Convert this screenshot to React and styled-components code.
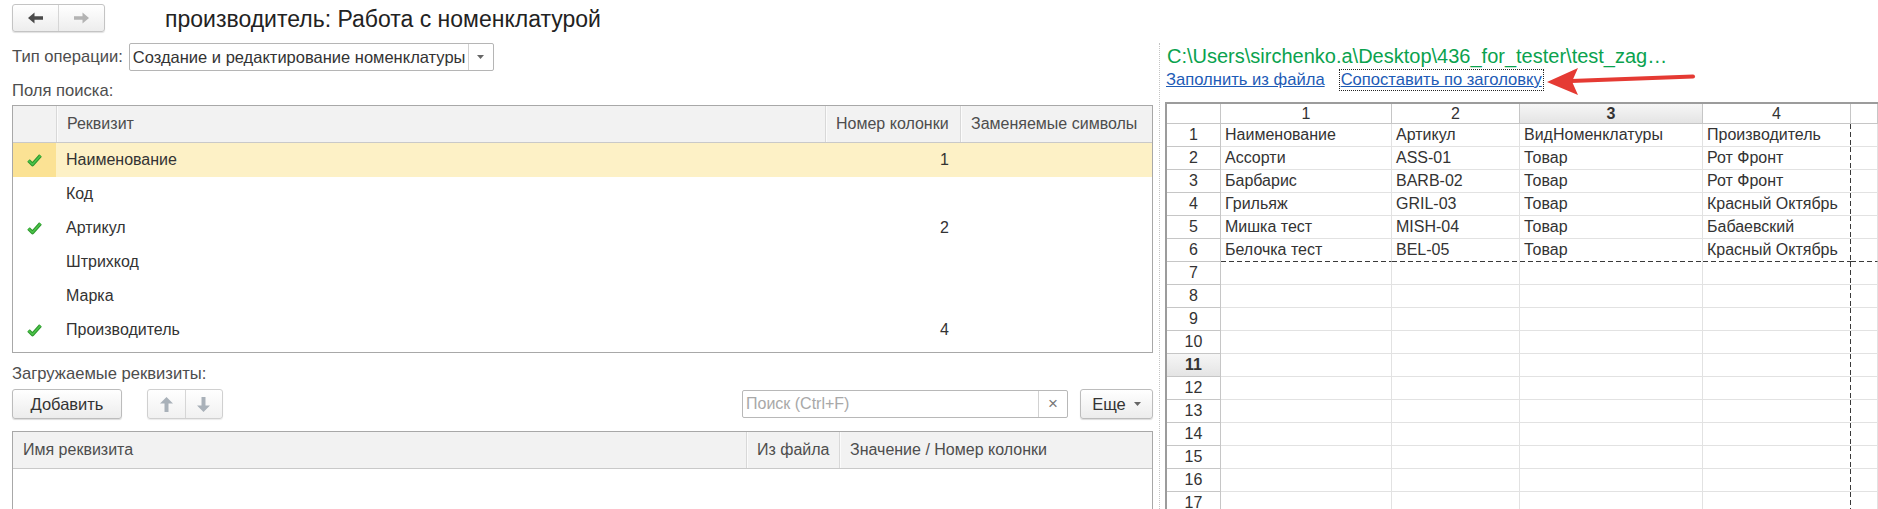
import React from "react";
import styled, { createGlobalStyle } from "styled-components";

const GlobalStyle = createGlobalStyle`
  html, body { margin: 0; padding: 0; background: #fff; }
  body { font-family: "Liberation Sans", Arial, sans-serif; color: #333; overflow: hidden; }
  * { box-sizing: border-box; }
`;

const Page = styled.div`
  width: 1878px;
  height: 509px;
  display: flex;
  flex-direction: column;
  overflow: hidden;
`;

const TopBar = styled.div`
  height: 36px;
  flex: none;
  display: flex;
  align-items: flex-start;
  padding: 4px 0 0 12px;
`;

const NavGroup = styled.div`
  display: flex;
  width: 93px;
  height: 28px;
  border: 1px solid #c4c4c4;
  border-radius: 3px;
  background: linear-gradient(#ffffff, #ededed);
  box-shadow: 0 1px 1px rgba(0, 0, 0, 0.12);
`;

const NavButton = styled.div`
  flex: 1;
  display: flex;
  align-items: center;
  justify-content: center;
  & + & {
    border-left: 1px solid #d6d6d6;
  }
`;

const Title = styled.h1`
  margin: 0 0 0 60px;
  font-size: 23px;
  font-weight: normal;
  line-height: 30px;
  color: #222;
  white-space: nowrap;
`;

const Main = styled.div`
  flex: 1;
  display: flex;
  min-height: 0;
`;

const LeftPanel = styled.div`
  width: 1153px;
  flex: none;
  padding: 7px 0 0 12px;
  display: flex;
  flex-direction: column;
`;

const Splitter = styled.div`
  width: 1px;
  margin: 7px 5px 0 6px;
  border-left: 1px dotted #c4c4c4;
`;

const RightPanel = styled.div`
  position: relative;
  flex: 1;
  min-width: 0;
  padding-top: 8px;
  display: flex;
  flex-direction: column;
`;

const FieldRow = styled.div`
  display: flex;
  align-items: center;
  gap: 6px;
  height: 28px;
`;

const Label = styled.div`
  font-size: 16.6px;
  color: #4d4d4d;
  line-height: 20px;
  white-space: nowrap;
  margin-top: ${(p) => p.$top || 0}px;
`;

const Combo = styled.div`
  width: 365px;
  height: 28px;
  display: flex;
  border: 1px solid #b5b5b5;
  border-radius: 2px;
  background: #fff;
`;

const ComboText = styled.div`
  flex: 1;
  padding: 0 3px;
  font-size: 16.5px;
  line-height: 26px;
  color: #333;
  white-space: nowrap;
  overflow: hidden;
`;

const DropPart = styled.div`
  width: ${(p) => p.$w || 25}px;
  display: flex;
  align-items: center;
  justify-content: center;
  border-left: 1px solid #d2d2d2;
  color: #777;
  font-size: 17px;
`;

const Table = styled.div`
  margin-top: ${(p) => p.$top}px;
  border: 1px solid #a8a8a8;
  ${(p) => (p.$open ? "border-bottom: none; flex: 1;" : `height: ${p.$h}px;`)}
  background: #fff;
`;

const HeadRow = styled.div`
  display: grid;
  grid-template-columns: ${(p) => p.$cols};
  height: 37px;
  background: #f2f2f2;
  border-bottom: 1px solid #c9c9c9;
`;

const HeadCell = styled.div`
  display: flex;
  align-items: center;
  padding: 0 10px;
  font-size: 16px;
  color: #4d4d4d;
  white-space: nowrap;
  overflow: hidden;
  & + & {
    border-left: 1px solid #d8d8d8;
    box-shadow: inset 1px 0 0 #fbfbfb;
  }
`;

const BodyRow = styled.div`
  display: grid;
  grid-template-columns: ${(p) => p.$cols};
  height: 34px;
  background: ${(p) => (p.$sel ? "#fdf1c6" : "transparent")};
`;

const Cell = styled.div`
  display: flex;
  align-items: center;
  justify-content: ${(p) => (p.$right ? "flex-end" : p.$center ? "center" : "flex-start")};
  padding: ${(p) => (p.$right ? "0 11px 0 0" : p.$center ? "0" : "0 10px")};
  font-size: 16px;
  color: #333;
  background: ${(p) => (p.$mark ? "#fbe294" : "transparent")};
  white-space: nowrap;
`;

const ToolRow = styled.div`
  display: flex;
  align-items: center;
  height: 30px;
  margin-top: 5px;
`;

const Button = styled.div`
  width: ${(p) => p.$w}px;
  height: 30px;
  margin-left: ${(p) => p.$ml || 0}px;
  display: flex;
  align-items: center;
  justify-content: center;
  gap: 8px;
  border: 1px solid #bcbcbc;
  border-radius: 3px;
  background: linear-gradient(#ffffff, #ececec);
  box-shadow: 0 1px 1px rgba(0, 0, 0, 0.14);
  font-size: 16.5px;
  color: #333;
`;

const ButtonGroup = styled.div`
  width: 76px;
  height: 30px;
  margin-left: 25px;
  display: flex;
  border: 1px solid #d0d0d0;
  border-radius: 3px;
  background: linear-gradient(#ffffff, #f1f1f1);
  box-shadow: 0 1px 1px rgba(0, 0, 0, 0.08);
`;

const Spacer = styled.div`
  flex: 1;
`;

const Search = styled.div`
  width: 326px;
  height: 28px;
  display: flex;
  border: 1px solid #b8b8b8;
  border-radius: 2px;
  background: #fff;
`;

const Placeholder = styled.div`
  flex: 1;
  padding-left: 3px;
  font-size: 16px;
  line-height: 26px;
  color: #a8a8a8;
`;

const PathText = styled.div`
  padding-left: 2px;
  font-size: 20px;
  line-height: 24px;
  color: #0aa24e;
  white-space: nowrap;
`;

const LinksRow = styled.div`
  display: flex;
  align-items: center;
  height: 22px;
  margin-top: 1px;
  gap: 14px;
`;

const Link = styled.a`
  font-size: 16.6px;
  line-height: 20px;
  color: #1d5bb6;
  text-decoration: underline;
  padding: 0 1px;
  outline: ${(p) => (p.$focus ? "1px dotted #222" : "none")};
  white-space: nowrap;
`;

const Arrow = styled.svg`
  position: absolute;
  left: 380px;
  top: 28px;
`;

const Sheet = styled.div`
  margin-top: 11px;
  flex: 1;
  border-left: 2px solid #9c9c9c;
  border-top: 2px solid #9c9c9c;
  overflow: hidden;
  display: grid;
  grid-template-columns: 54px 171px 128px 183px 148px 1fr;
  grid-template-rows: 20px;
  grid-auto-rows: 23px;
`;

const SheetHead = styled.div`
  display: flex;
  align-items: center;
  justify-content: center;
  font-size: 16px;
  font-weight: ${(p) => (p.$active ? "bold" : "normal")};
  color: #333;
  background: ${(p) => (p.$active ? "linear-gradient(#f6f6f6, #e4e4e4)" : "#fff")};
  border-right: 1px solid #c6c6c6;
  border-bottom: 1px solid #c6c6c6;
`;

const dashX = "repeating-linear-gradient(to right, #3a3a3a 0 5px, transparent 5px 8px) left bottom / 100% 1px no-repeat";
const dashY = "repeating-linear-gradient(to bottom, #3a3a3a 0 5px, transparent 5px 8px) right top / 1px 100% no-repeat";

const SheetCell = styled.div`
  padding: 0 4px;
  font-size: 16px;
  line-height: 22px;
  color: #333;
  white-space: nowrap;
  overflow: hidden;
  border-right: 1px solid ${(p) => (p.$dashR ? "transparent" : "#e2e2e2")};
  border-bottom: 1px solid ${(p) => (p.$dashB ? "transparent" : "#e2e2e2")};
  background: ${(p) => [p.$dashB && dashX, p.$dashR && dashY].filter(Boolean).join(", ") || "none"};
  background-origin: border-box;
`;

const Check = () => (
  <svg width="17" height="14" viewBox="0 0 17 14">
    <polyline points="2.5,7.5 6.5,11.5 14.5,2.5" fill="none" stroke="#2c962c" strokeWidth="3.6" strokeLinejoin="round" />
    <polyline points="2.5,7.5 6.5,11.5 14.5,2.5" fill="none" stroke="#4cc44a" strokeWidth="1.6" strokeLinejoin="round" />
  </svg>
);

const HArrow = ({ dir, color }) => (
  <svg width="15" height="12" viewBox="0 0 15 12" style={{ transform: dir === "right" ? "scaleX(-1)" : "none" }}>
    <polygon points="0,6 6.5,0.5 6.5,4.3 15,4.3 15,7.7 6.5,7.7 6.5,11.5" fill={color} />
  </svg>
);

const VArrow = ({ dir }) => (
  <svg width="13" height="15" viewBox="0 0 13 15" style={{ transform: dir === "down" ? "scaleY(-1)" : "none" }}>
    <polygon points="6.5,0 13,6.5 8.5,6.5 8.5,15 4.5,15 4.5,6.5 0,6.5" fill="#a9b1b9" />
  </svg>
);

const Caret = () => (
  <svg width="7" height="4" viewBox="0 0 7 4">
    <polygon points="0,0 7,0 3.5,4" fill="#666" />
  </svg>
);

const searchCols = "43px 1fr 135px 192px";
const searchFields = [
  { name: "Наименование", col: "1", on: true, sel: true },
  { name: "Код" },
  { name: "Артикул", col: "2", on: true },
  { name: "Штрихкод" },
  { name: "Марка" },
  { name: "Производитель", col: "4", on: true },
];

const loadCols = "1fr 93px 313px";

const sheetData = [
  ["Наименование", "Артикул", "ВидНоменклатуры", "Производитель"],
  ["Ассорти", "ASS-01", "Товар", "Рот Фронт"],
  ["Барбарис", "BARB-02", "Товар", "Рот Фронт"],
  ["Грильяж", "GRIL-03", "Товар", "Красный Октябрь"],
  ["Мишка тест", "MISH-04", "Товар", "Бабаевский"],
  ["Белочка тест", "BEL-05", "Товар", "Красный Октябрь"],
];

function Spreadsheet() {
  const rows = [];
  for (let r = 1; r <= 17; r++) rows.push(sheetData[r - 1] || ["", "", "", ""]);
  return (
    <Sheet>
      <SheetHead />
      {[1, 2, 3, 4].map((c) => (
        <SheetHead key={c} $active={c === 3}>{c}</SheetHead>
      ))}
      <SheetHead />
      {rows.map((row, i) => (
        <React.Fragment key={i}>
          <SheetHead $active={i + 1 === 11}>{i + 1}</SheetHead>
          {row.map((v, c) => (
            <SheetCell key={c} $dashB={i === 5} $dashR={c === 3}>
              {v}
            </SheetCell>
          ))}
          <SheetCell $dashB={i === 5} />
        </React.Fragment>
      ))}
    </Sheet>
  );
}

export default function App() {
  return (
    <Page>
      <GlobalStyle />
      <TopBar>
        <NavGroup>
          <NavButton><HArrow dir="left" color="#4a4a4a" /></NavButton>
          <NavButton><HArrow dir="right" color="#b3b3b3" /></NavButton>
        </NavGroup>
        <Title>производитель: Работа с номенклатурой</Title>
      </TopBar>
      <Main>
        <LeftPanel>
          <FieldRow>
            <Label>Тип операции:</Label>
            <Combo>
              <ComboText>Создание и редактирование номенклатуры</ComboText>
              <DropPart><Caret /></DropPart>
            </Combo>
          </FieldRow>
          <Label $top={10}>Поля поиска:</Label>
          <Table $top={4} $h={248}>
            <HeadRow $cols={searchCols}>
              <HeadCell />
              <HeadCell>Реквизит</HeadCell>
              <HeadCell>Номер колонки</HeadCell>
              <HeadCell>Заменяемые символы</HeadCell>
            </HeadRow>
            {searchFields.map((f) => (
              <BodyRow key={f.name} $cols={searchCols} $sel={f.sel}>
                <Cell $center $mark={f.sel}>{f.on && <Check />}</Cell>
                <Cell>{f.name}</Cell>
                <Cell $right>{f.col}</Cell>
                <Cell />
              </BodyRow>
            ))}
          </Table>
          <Label $top={11}>Загружаемые реквизиты:</Label>
          <ToolRow>
            <Button $w={110}>Добавить</Button>
            <ButtonGroup>
              <NavButton><VArrow dir="up" /></NavButton>
              <NavButton><VArrow dir="down" /></NavButton>
            </ButtonGroup>
            <Spacer />
            <Search>
              <Placeholder>Поиск (Ctrl+F)</Placeholder>
              <DropPart $w={29}>×</DropPart>
            </Search>
            <Button $w={73} $ml={12}>Еще <Caret /></Button>
          </ToolRow>
          <Table $top={12} $open>
            <HeadRow $cols={loadCols}>
              <HeadCell>Имя реквизита</HeadCell>
              <HeadCell>Из файла</HeadCell>
              <HeadCell>Значение / Номер колонки</HeadCell>
            </HeadRow>
          </Table>
        </LeftPanel>
        <Splitter />
        <RightPanel>
          <PathText>C:\Users\sirchenko.a\Desktop\436_for_tester\test_zag…</PathText>
          <LinksRow>
            <Link>Заполнить из файла</Link>
            <Link $focus>Сопоставить по заголовку</Link>
          </LinksRow>
          <Arrow width="155" height="34" viewBox="0 0 155 34">
            <line x1="26" y1="17" x2="148" y2="12.5" stroke="#e53a33" strokeWidth="4" strokeLinecap="round" />
            <polygon points="2,18 33,4 27,17.5 33,31" fill="#e53a33" />
          </Arrow>
          <Spreadsheet />
        </RightPanel>
      </Main>
    </Page>
  );
}
